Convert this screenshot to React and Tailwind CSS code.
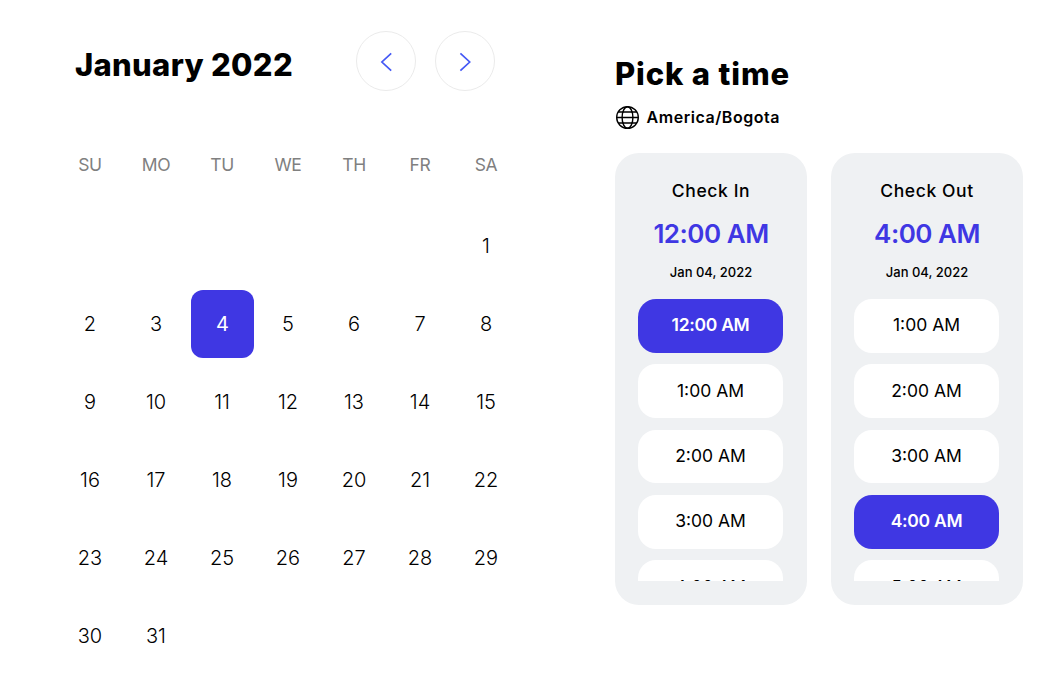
import React from "react";

const WEEKDAYS = ["SU", "MO", "TU", "WE", "TH", "FR", "SA"];
const LEADING_BLANKS = [0, 1, 2, 3, 4, 5];
const DAYS = Array.from({ length: 31 }, (_, i) => i + 1);

const CHECK_IN = ["12:00 AM", "1:00 AM", "2:00 AM", "3:00 AM", "4:00 AM"];
const CHECK_OUT = ["1:00 AM", "2:00 AM", "3:00 AM", "4:00 AM", "5:00 AM"];

function ArrowButton({ label, d }) {
  return (
    <button
      aria-label={label}
      className="flex size-[60px] items-center justify-center rounded-full border border-[#ebebeb] bg-white"
    >
      <svg viewBox="0 0 20 20" className="mt-[2px] size-5" fill="none" stroke="#4458f5" strokeWidth="1.7">
        <path d={d} />
      </svg>
    </button>
  );
}

function Globe() {
  return (
    <svg viewBox="0 0 24 24" className="size-6" fill="none" stroke="#000" strokeWidth="1.4">
      <circle cx="12.5" cy="12.5" r="10.8" />
      <ellipse cx="12.5" cy="12.5" rx="5.4" ry="10.8" />
      <path d="M1.7 12.5h21.6M3.5 7h18M3.5 18h18" />
    </svg>
  );
}

function TimePanel({ title, selected, times }) {
  return (
    <section className="flex h-[452px] w-48 flex-col rounded-3xl bg-[#eff1f3] pt-[25px] text-center">
      <h2 className="text-[17.5px] leading-[25px] font-medium tracking-[0.6px]">{title}</h2>
      <p className="mt-[13px] text-[26px] leading-9 font-semibold tracking-[-0.5px] text-[#3f37e3]">{selected}</p>
      <p className="mt-[10px] text-[13px] leading-5 font-medium">Jan 04, 2022</p>
      <div className="mt-[17px] ml-[23px] flex h-[282px] w-[145px] flex-col gap-[11.6px] overflow-hidden">
        {times.map((time) => (
          <button
            key={time}
            className={
              time === selected
                ? "h-[53.75px] shrink-0 rounded-[18px] bg-[#3f37e3] pb-[1.6px] text-[17.5px] font-semibold tracking-[-0.3px] text-white"
                : "h-[53.75px] shrink-0 rounded-[18px] bg-white pb-[1.2px] text-[17.5px] text-black"
            }
          >
            {time}
          </button>
        ))}
      </div>
    </section>
  );
}

export default function App() {
  return (
    <main className="flex h-[688px] w-[1064px] overflow-hidden bg-white font-['Inter',sans-serif] text-black">
      <section className="ml-[57px] w-[462px] pt-[31px]">
        <header className="flex h-[60px] items-center justify-between pr-6 pl-[18px]">
          <h1 className="pt-[7px] text-[31px] leading-10 font-extrabold tracking-[0.3px] whitespace-nowrap">
            January 2022
          </h1>
          <div className="flex gap-[19px]">
            <ArrowButton label="Previous month" d="M15.2 1.4 5.9 10l9.3 8.6" />
            <ArrowButton label="Next month" d="m5.4 1.4 9.3 8.6-9.3 8.6" />
          </div>
        </header>
        <div className="mt-[62px] grid grid-cols-7">
          {WEEKDAYS.map((day) => (
            <span key={day} className="text-center text-[17.5px] leading-6 tracking-[-0.4px] text-[#808080]">
              {day}
            </span>
          ))}
        </div>
        <div className="mt-[30px] grid grid-cols-7">
          {LEADING_BLANKS.map((i) => (
            <span key={i} />
          ))}
          {DAYS.map((day) => (
            <div key={day} className="flex h-[78px] items-center justify-center">
              <button
                className={
                  day === 4
                    ? "ml-px h-[68px] w-[63px] rounded-xl bg-[#3f37e3] text-[20px] text-white"
                    : "h-[68px] w-[63px] rounded-xl text-[20px] font-[350]"
                }
              >
                {day}
              </button>
            </div>
          ))}
        </div>
      </section>

      <section className="ml-24 pt-[54px]">
        <h1 className="text-[31px] leading-10 font-extrabold tracking-[0.85px] whitespace-nowrap">Pick a time</h1>
        <div className="mt-[11px] flex h-6 items-center gap-[7.5px]">
          <Globe />
          <span className="text-[16px] leading-6 font-semibold tracking-[0.55px]">America/Bogota</span>
        </div>
        <div className="mt-6 flex gap-6">
          <TimePanel title="Check In" selected="12:00 AM" times={CHECK_IN} />
          <TimePanel title="Check Out" selected="4:00 AM" times={CHECK_OUT} />
        </div>
      </section>
    </main>
  );
}
